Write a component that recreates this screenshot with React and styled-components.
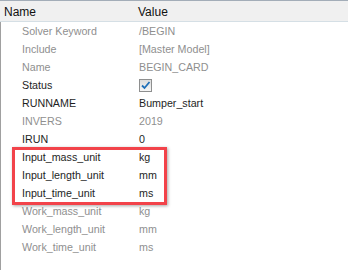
import styled, { createGlobalStyle } from "styled-components";

const rows = [
  { name: "Solver Keyword", value: "/BEGIN", dim: true },
  { name: "Include", value: "[Master Model]", dim: true },
  { name: "Name", value: "BEGIN_CARD", dim: true },
  { name: "Status", check: true },
  { name: "RUNNAME", value: "Bumper_start" },
  { name: "INVERS", value: "2019", dim: true },
  { name: "IRUN", value: "0" },
  { name: "Input_mass_unit", value: "kg" },
  { name: "Input_length_unit", value: "mm" },
  { name: "Input_time_unit", value: "ms" },
  { name: "Work_mass_unit", value: "kg", dim: true },
  { name: "Work_length_unit", value: "mm", dim: true },
  { name: "Work_time_unit", value: "ms", dim: true },
];

export default function App() {
  return (
    <>
      <GlobalStyle />
      <Grid>
        <Header>
          <HeadCell>Name</HeadCell>
          <HeadCell>Value</HeadCell>
        </Header>
        <Body>
          {rows.map((r) => (
            <Row key={r.name} $dim={r.dim}>
              <NameCell>{r.name}</NameCell>
              <ValueCell>
                {r.check ? (
                  <CheckBox>
                    <svg width="11" height="11" viewBox="0 0 11 11">
                      <path
                        d="M2 5.5 L4.5 8 L9.5 2"
                        fill="none"
                        stroke="#1f6fb8"
                        strokeWidth="1.8"
                      />
                    </svg>
                  </CheckBox>
                ) : (
                  r.value
                )}
              </ValueCell>
            </Row>
          ))}
          <Highlight />
        </Body>
      </Grid>
    </>
  );
}

const GlobalStyle = createGlobalStyle`
  html, body {
    margin: 0;
    background: #fff;
  }
  body {
    font-family: "Liberation Sans", Arial, sans-serif;
    font-size: 10.7px;
  }
`;

const Grid = styled.div`
  width: 348px;
  height: 270px;
  display: flex;
  flex-direction: column;
  border-top: 1px solid #a3adb8;
  box-sizing: border-box;
`;

const Header = styled.div`
  display: grid;
  grid-template-columns: 134px 1fr;
  height: 20px;
  background: #f0f0f0;
  border-bottom: 1px solid #d5dfe5;
  align-items: center;
  font-size: 12px;
  color: #111;
`;

const HeadCell = styled.div`
  padding-left: 4px;
  padding-top: 1px;
`;

const Body = styled.div`
  position: relative;
  flex: 1;
  border-left: 1px solid #a0a0a0;
`;

const Row = styled.div`
  display: grid;
  grid-template-columns: 133px 1fr;
  height: 18px;
  align-items: center;
  color: ${(p) => (p.$dim ? "#8f8f8f" : "#1e1e1e")};
`;

const NameCell = styled.div`
  padding-left: 21px;
`;

const ValueCell = styled.div`
  padding-left: 5px;
  display: flex;
  align-items: center;
`;

const CheckBox = styled.span`
  width: 11px;
  height: 11px;
  border: 1px solid #8e8f8f;
  background: linear-gradient(#dcdcdc, #f6f6f6);
  display: flex;
  align-items: center;
  justify-content: center;
`;

const Highlight = styled.div`
  position: absolute;
  left: 11px;
  top: 125px;
  width: 155px;
  height: 58px;
  box-sizing: border-box;
  border: 3px solid #f2434a;
  box-shadow: 1px 1px 3px rgba(0, 0, 0, 0.35);
`;
